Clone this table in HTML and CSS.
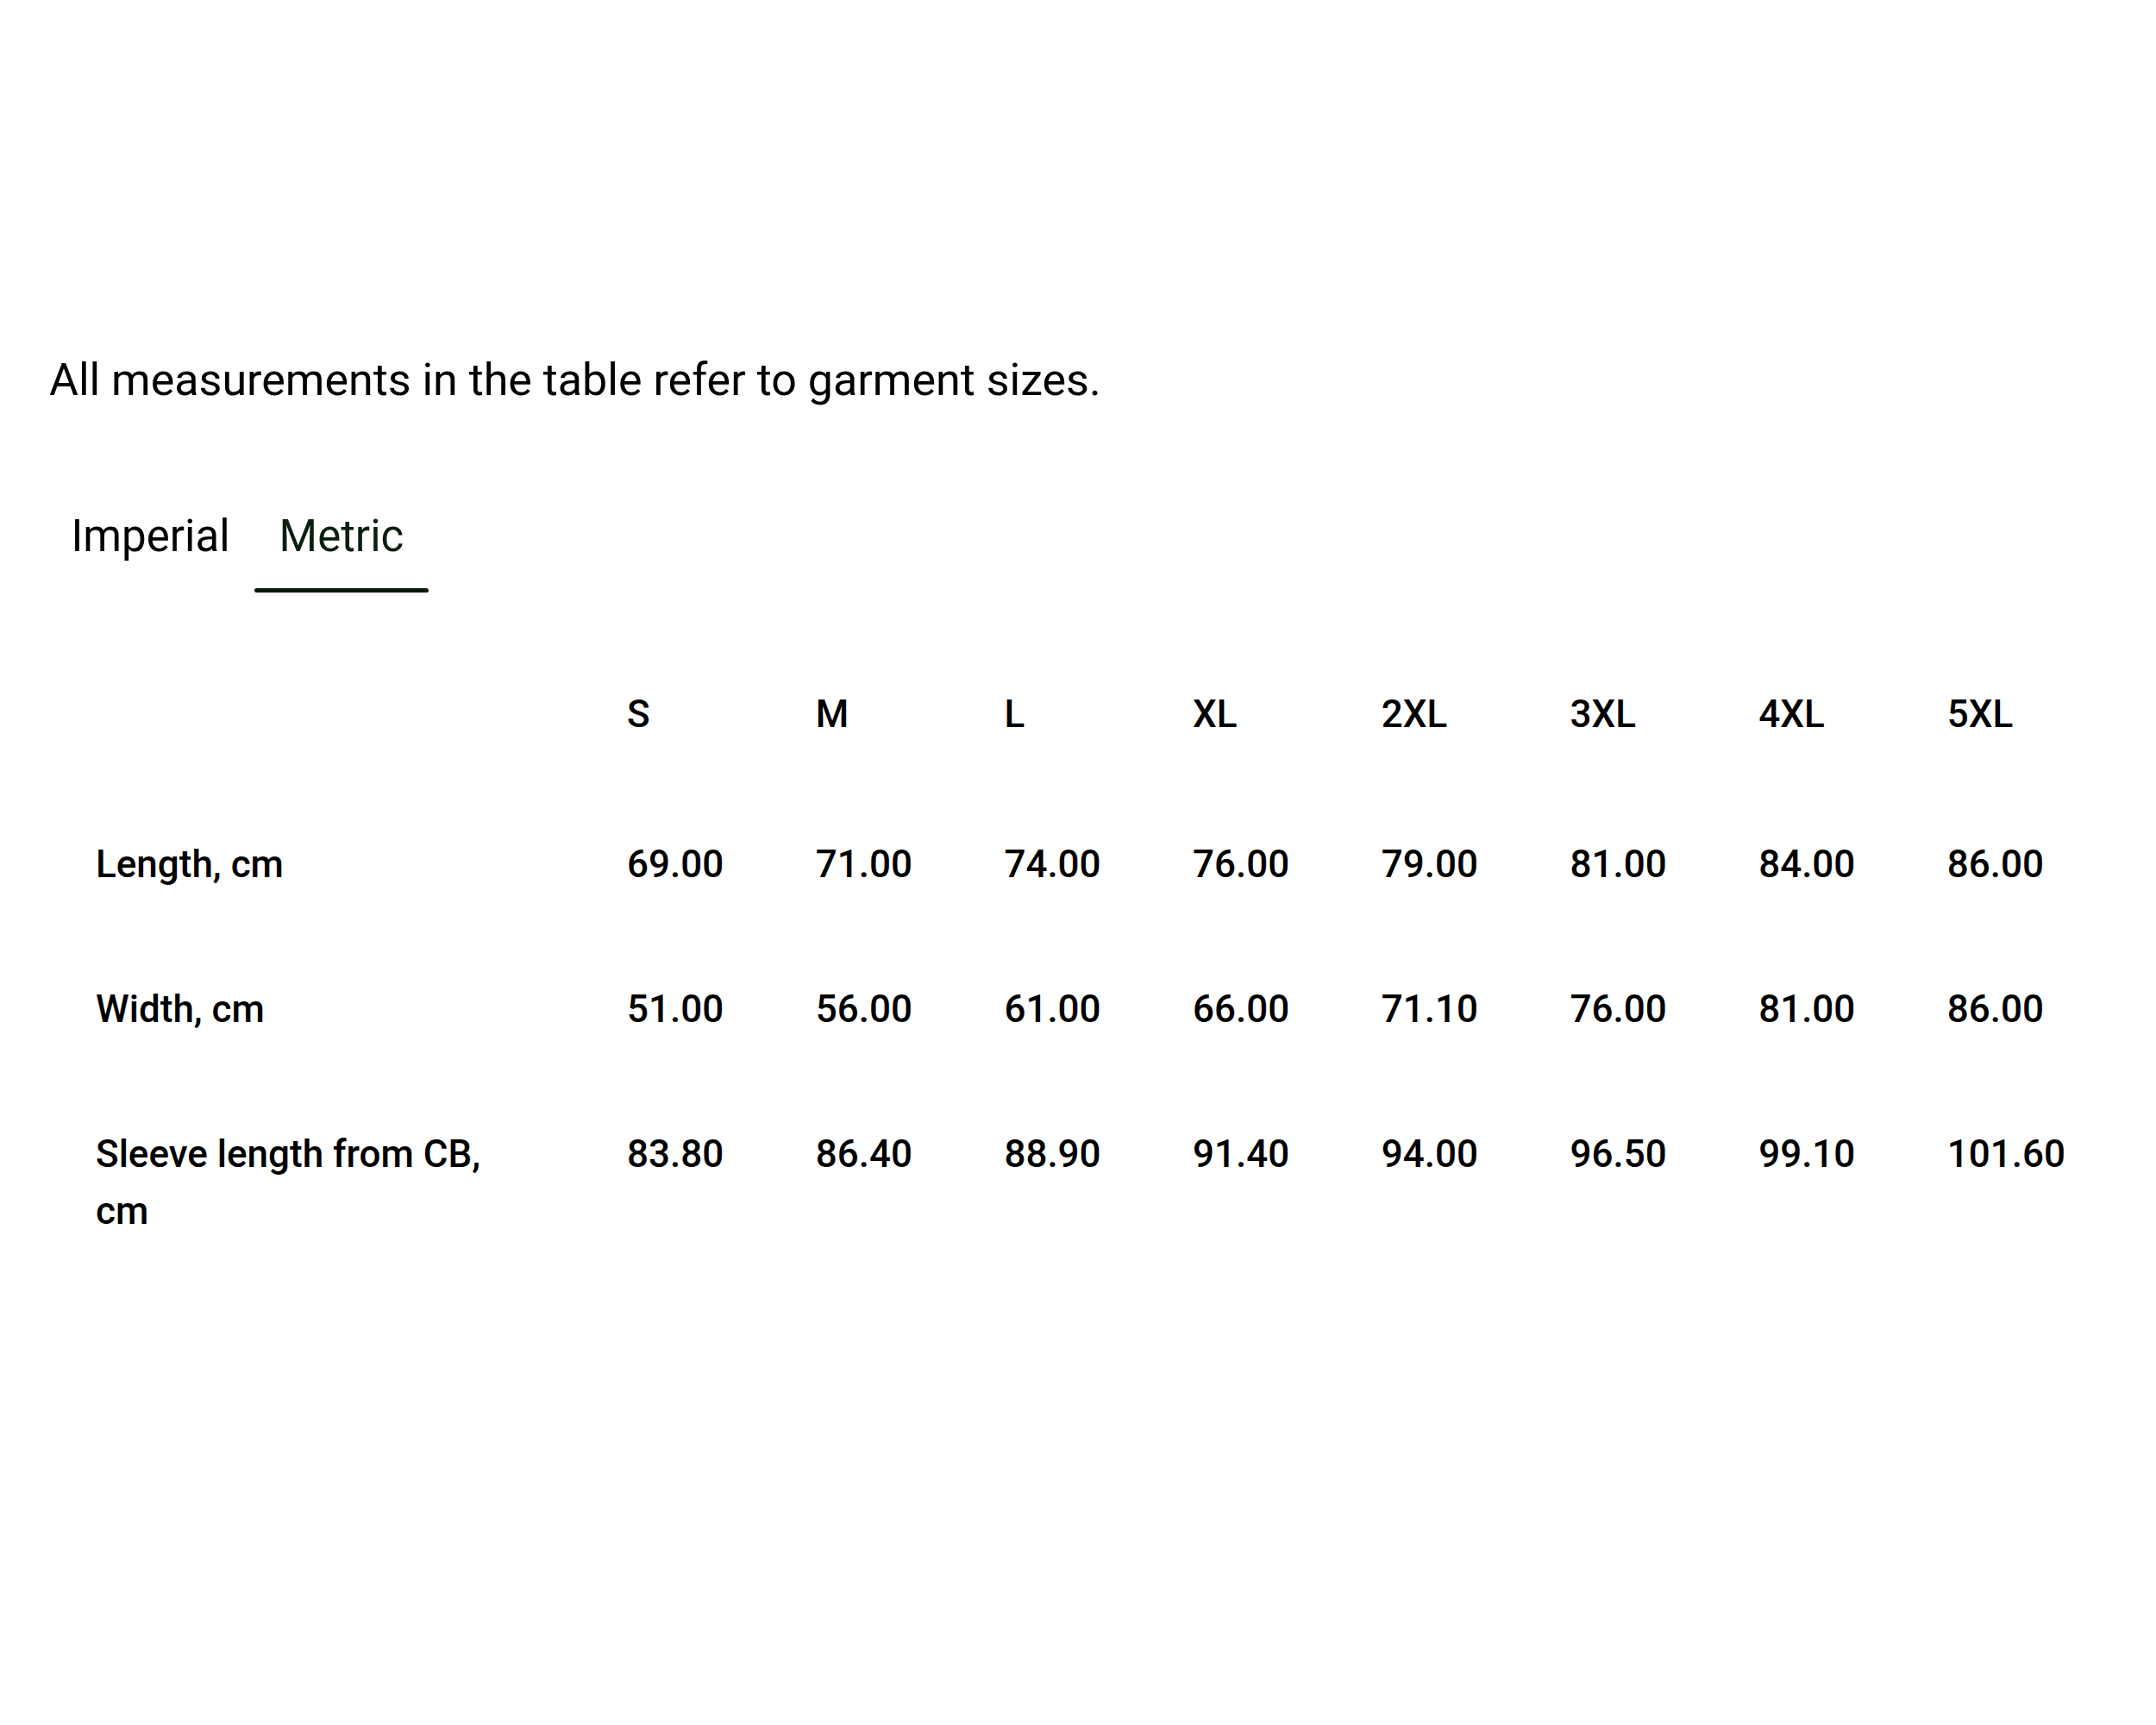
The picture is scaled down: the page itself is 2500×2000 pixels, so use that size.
FILE: index.html
```html
<!DOCTYPE html>
<html lang="en">
<head>
<meta charset="utf-8">
<title>Size guide</title>
<link rel="stylesheet" href="styles.css">
</head>
<body>
<main class="size-guide">
  <p class="intro">All measurements in the table refer to garment sizes.</p>
  <nav class="tabs">
    <button class="tab">Imperial</button>
    <button class="tab tab-active">Metric</button>
  </nav>
  <table class="size-table">
    <colgroup>
      <col class="col-label">
      <col class="col-size"><col class="col-size"><col class="col-size"><col class="col-size">
      <col class="col-size"><col class="col-size"><col class="col-size"><col>
    </colgroup>
    <thead>
      <tr>
        <th></th>
        <th>S</th><th>M</th><th>L</th><th>XL</th><th>2XL</th><th>3XL</th><th>4XL</th><th>5XL</th>
      </tr>
    </thead>
    <tbody>
      <tr>
        <th>Length, cm</th>
        <td>69.00</td><td>71.00</td><td>74.00</td><td>76.00</td><td>79.00</td><td>81.00</td><td>84.00</td><td>86.00</td>
      </tr>
      <tr>
        <th>Width, cm</th>
        <td>51.00</td><td>56.00</td><td>61.00</td><td>66.00</td><td>71.10</td><td>76.00</td><td>81.00</td><td>86.00</td>
      </tr>
      <tr>
        <th>Sleeve length from CB, cm</th>
        <td>83.80</td><td>86.40</td><td>88.90</td><td>91.40</td><td>94.00</td><td>96.50</td><td>99.10</td><td>101.60</td>
      </tr>
    </tbody>
  </table>
</main>
</body>
</html>
```

FILE: styles.css
```css
html, body {
  margin: 0;
  padding: 0;
  background: #ffffff;
}

body {
  font-family: Roboto, "Liberation Sans", Arial, sans-serif;
  color: #000000;
}

.size-guide {
  padding: 402px 53px 0 57px;
}

.intro {
  margin: 0;
  font-size: 52px;
  line-height: 78px;
  font-weight: 400;
}

.tabs {
  display: flex;
  margin-top: 104px;
  margin-left: -3px;
}

.tab {
  display: flex;
  flex-direction: column;
  align-items: stretch;
  padding: 0 28.5px;
  border: 0;
  background: transparent;
  font-family: inherit;
  font-size: 51px;
  line-height: 76px;
  font-weight: 400;
  color: #000000;
  cursor: pointer;
}

.tab::after {
  content: "";
  display: block;
  height: 5px;
  margin: 22px -28.5px 0;
  border-radius: 3px;
  background: transparent;
}

.tab-active {
  color: #0b1f10;
}

.tab-active::after {
  background: #061a0b;
}

.size-table {
  margin-top: 55px;
  width: 100%;
  table-layout: fixed;
  border-collapse: collapse;
  font-size: 44px;
  line-height: 66px;
  font-weight: 500;
}

.col-label {
  width: 616px;
}

.col-size {
  width: 218.7px;
}

.size-table th,
.size-table td {
  text-align: left;
  vertical-align: top;
  font-weight: 500;
  padding: 51px 54px;
}

.size-table thead th {
  padding: 53px 54px 57px;
}
```
